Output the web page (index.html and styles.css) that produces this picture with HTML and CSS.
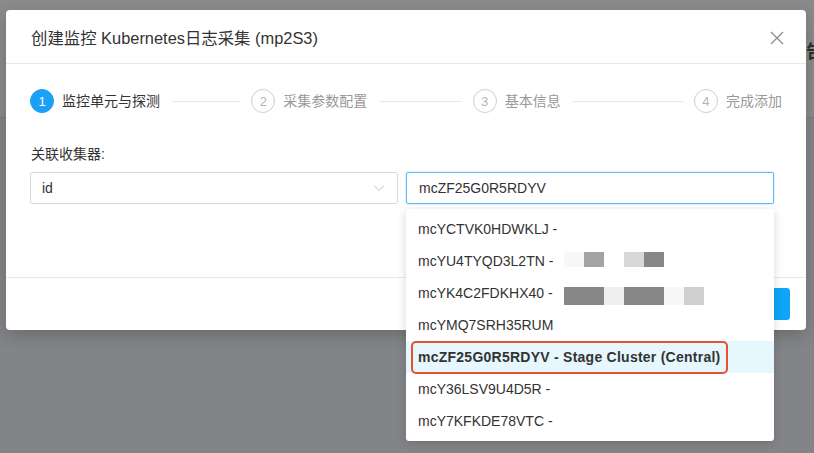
FILE: index.html
```html
<!DOCTYPE html>
<html lang="zh-CN">
<head>
<meta charset="utf-8">
<title>创建监控 Kubernetes日志采集</title>
<link rel="stylesheet" href="styles.css">
</head>
<body>
<div class="page">
  <div class="page-header"><span class="page-header-text">报告</span></div>
  <div class="page-body"></div>
</div>

<div class="modal">
  <div class="modal-header">
    <div class="modal-title">创建监控 Kubernetes日志采集 (mp2S3)</div>
    <svg class="modal-close" width="14" height="14" viewBox="0 0 14 14"><path d="M1 1L13 13M13 1L1 13" stroke="#8c8c8c" stroke-width="1.3" fill="none"/></svg>
  </div>
  <div class="modal-body">
    <div class="steps">
      <div class="step step-active"><span class="step-icon">1</span><span class="step-title">监控单元与探测</span><span class="step-line"></span></div>
      <div class="step"><span class="step-icon">2</span><span class="step-title">采集参数配置</span><span class="step-line"></span></div>
      <div class="step"><span class="step-icon">3</span><span class="step-title">基本信息</span><span class="step-line"></span></div>
      <div class="step step-last"><span class="step-icon">4</span><span class="step-title">完成添加</span></div>
    </div>
    <div class="form-label">关联收集器:</div>
    <div class="form-row">
      <div class="select">
        <span class="select-value">id</span>
        <svg class="select-arrow" width="12" height="8" viewBox="0 0 12 8"><path d="M1 1.5L6 6.5L11 1.5" stroke="#bfbfbf" stroke-width="1" fill="none"/></svg>
      </div>
      <div class="input input-focused">mcZF25G0R5RDYV</div>
    </div>
  </div>
  <div class="modal-footer">
    <button class="btn">取 消</button>
    <button class="btn btn-primary">下一步</button>
  </div>
</div>

<ul class="dropdown">
  <li class="option">mcYCTVK0HDWKLJ -</li>
  <li class="option">mcYU4TYQD3L2TN -<span class="mosaic m-row1"><i class="c1"></i><i class="c2"></i><i class="c3"></i><i class="c4"></i><i class="c5"></i></span></li>
  <li class="option">mcYK4C2FDKHX40 -<span class="mosaic m-row2"><i class="c5"></i><i class="c5"></i><i class="c6"></i><i class="c5"></i><i class="c5"></i><i class="c1"></i><i class="c7"></i></span></li>
  <li class="option">mcYMQ7SRH35RUM</li>
  <li class="option option-selected"><span class="annot">mcZF25G0R5RDYV - Stage Cluster (Central)</span></li>
  <li class="option">mcY36LSV9U4D5R -</li>
  <li class="option">mcY7KFKDE78VTC -</li>
</ul>
</body>
</html>
```

FILE: styles.css
```css
* { box-sizing: border-box; }
html, body { margin: 0; padding: 0; }
body {
  width: 814px;
  height: 453px;
  overflow: hidden;
  background: #858689;
  font-family: "Liberation Sans", Arial, "Noto Sans CJK SC", sans-serif;
  color: #333;
  position: relative;
}

.page { display: flex; flex-direction: column; height: 100%; }
.page-header {
  height: 118px;
  background: #8a8a8b;
  border-bottom: 1px solid #7c7c7e;
  display: flex;
  justify-content: flex-end;
  padding-top: 40px;
  overflow: hidden;
}
.page-header-text {
  font-size: 18px;
  font-weight: bold;
  color: #2e2e2e;
  margin-right: -10px;
  line-height: 24px;
}
.page-body { flex: 1; background: #838487; }

.modal {
  position: absolute;
  left: 6px;
  top: 10px;
  width: 800px;
  height: 320px;
  background: #fff;
  border-radius: 4px;
  box-shadow: 0 6px 16px rgba(0,0,0,0.18);
  display: flex;
  flex-direction: column;
}
.modal-header {
  height: 54px;
  padding: 0 22px 0 24px;
  border-bottom: 1px solid #e9e9e9;
  display: flex;
  align-items: center;
  justify-content: space-between;
}
.modal-title {
  font-size: 16.4px;
  color: #333;
  line-height: 22px;
  padding-left: 1px;
  margin-top: 2px;
}
.modal-close { display: block; margin-top: 2px; }

.modal-body {
  flex: 1;
  padding: 25px 24px 0 24px;
}
.steps {
  display: flex;
  align-items: center;
  height: 24px;
}
.step { display: flex; align-items: center; flex: 1 1 0; min-width: 0; }
.step-last { flex: none; }
.step-icon {
  width: 24px;
  height: 24px;
  border-radius: 50%;
  border: 1px solid #cfcfcf;
  color: #b5b5b5;
  font-size: 13px;
  display: flex;
  align-items: center;
  justify-content: center;
  margin-right: 8px;
  flex: none;
}
.step-title { font-size: 14px; color: #999; line-height: 22px; flex: none; }
.step-active .step-icon { background: #1aa0f6; border-color: #1aa0f6; color: #fff; }
.step-active .step-title { color: #333; }
.step-line {
  flex: 1;
  height: 1px;
  background: #e8e8e8;
  margin: 0 11px 0 12px;
}

.form-label {
  font-size: 14px;
  line-height: 20px;
  margin-top: 31px;
  padding-left: 1px;
  color: #333;
}
.form-row {
  display: flex;
  gap: 8px;
  margin-top: 8px;
}
.select, .input {
  width: 368px;
  height: 32px;
  border: 1px solid #d9d9d9;
  border-radius: 2px;
  display: flex;
  align-items: center;
  padding: 0 12px 0 11px;
  font-size: 14px;
  color: #333;
  justify-content: space-between;
}
.input-focused {
  border-color: #5fbdf3;
  box-shadow: 0 0 0 1px rgba(95,189,243,0.18);
  padding-left: 12px;
}
.select-arrow { display: block; margin-right: 0; }

.modal-footer {
  height: 53px;
  border-top: 1px solid #e9e9e9;
  display: flex;
  justify-content: flex-end;
  align-items: center;
  gap: 8px;
  padding: 0 16px;
}
.btn {
  height: 32px;
  padding: 0 15px;
  font-size: 14px;
  border: 1px solid #d9d9d9;
  background: #fff;
  border-radius: 3px;
  font-family: inherit;
  color: #333;
}
.btn-primary { background: #0ea5f6; border-color: #0ea5f6; color: #fff; width: 80px; }

.dropdown {
  position: absolute;
  left: 406px;
  top: 209px;
  width: 368px;
  margin: 0;
  padding: 4px 0;
  list-style: none;
  background: #fff;
  border-radius: 3px;
  box-shadow: 0 2px 10px rgba(0,0,0,0.16);
}
.option {
  height: 32px;
  display: flex;
  align-items: center;
  padding: 0 12px;
  font-size: 14px;
  color: #333;
  white-space: nowrap;
}
.option-selected { background: #e6f7fe; font-weight: bold; }
.annot {
  display: inline-block;
  border: 2px solid #e4532b;
  border-radius: 5px;
  line-height: 29px;
  height: 33px;
  padding: 0 5px 0 5px;
  margin-left: -7px;
  letter-spacing: 0.25px;
}

.mosaic { display: flex; margin-left: 11px; }
.mosaic i { display: block; width: 20px; }
.m-row1 i { height: 15px; margin-top: -3px; }
.m-row2 i { height: 18px; margin-top: 6px; }
.c1 { background: #f7f7f7; }
.c2 { background: #a3a3a3; }
.c3 { background: #ffffff; }
.c4 { background: #d8d8d8; }
.c5 { background: #878787; }
.c6 { background: #efefef; }
.c7 { background: #cfcfcf; }
```
